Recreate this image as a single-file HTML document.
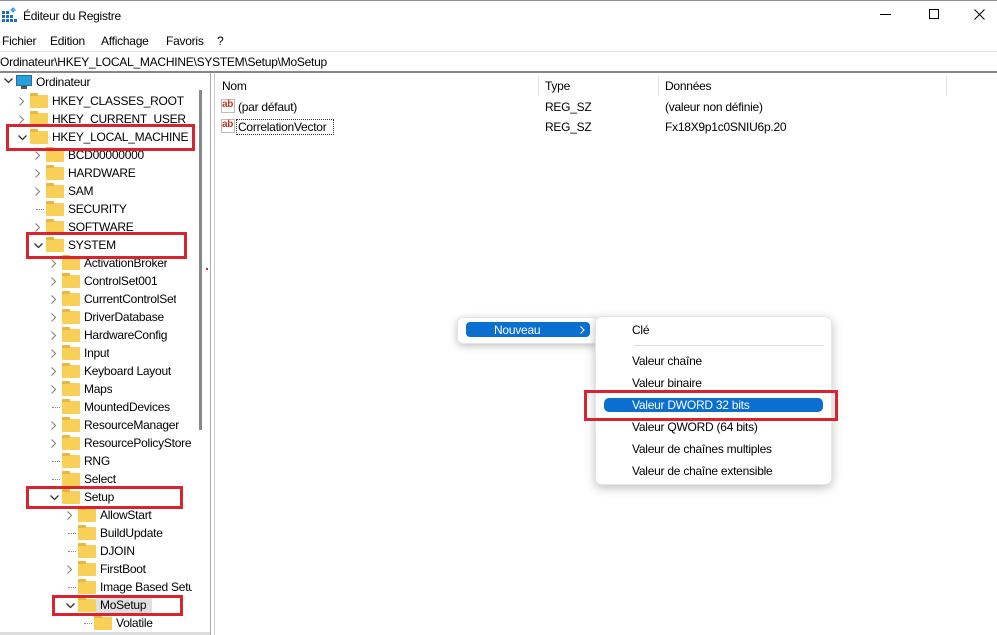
<!DOCTYPE html>
<html><head><meta charset="utf-8"><style>
*{margin:0;padding:0;box-sizing:border-box}
body{width:997px;height:635px;overflow:hidden;background:#fff;font-family:"Liberation Sans",sans-serif;font-size:12px;letter-spacing:-0.25px;color:#000;position:relative}
.a{position:absolute;white-space:nowrap}
.f{position:absolute;width:18px;height:13px;background:#f8cf57;border-radius:1px}
.f:before{content:"";position:absolute;left:0;top:-2px;width:8px;height:3px;background:#e9b53d;border-radius:1px 1px 0 0}
.red{position:absolute;border:3px solid #d9232e}
.mi{position:absolute;left:632px;font-size:12px}
</style></head><body>
<div class="a" style="left:0;top:0;width:997px;height:1px;background:#8a9199"></div>
<svg class="a" style="left:2px;top:7px" width="16" height="16"><g fill="#1f6fbf"><rect x="0" y="4" width="3" height="3"/><rect x="4" y="4" width="3" height="3"/><rect x="0" y="8" width="3" height="3"/><rect x="4" y="8" width="3" height="3"/><rect x="8" y="8" width="3" height="3"/><rect x="0" y="12" width="3" height="3"/><rect x="4" y="12" width="3" height="3"/><rect x="8" y="12" width="3" height="3"/><rect x="12" y="12" width="3" height="3"/><rect x="9" y="1" width="4" height="4" transform="rotate(45 11 3)" fill="#3fa4ef"/></g></svg>
<div class="a" style="left:23px;top:9px;font-size:12px">Éditeur du Registre</div>
<div class="a" style="left:880px;top:14px;width:11px;height:1px;background:#000"></div>
<div class="a" style="left:929px;top:9px;width:10px;height:10px;border:1px solid #000"></div>
<svg class="a" style="left:974px;top:9px" width="11" height="11"><path d="M0.5 0.5L10.5 10.5M10.5 0.5L0.5 10.5" stroke="#000" stroke-width="1"/></svg>
<div class="a" style="left:2px;top:34px">Fichier</div>
<div class="a" style="left:50px;top:34px">Edition</div>
<div class="a" style="left:101px;top:34px">Affichage</div>
<div class="a" style="left:166px;top:34px">Favoris</div>
<div class="a" style="left:217px;top:34px">?</div>
<div class="a" style="left:0;top:51px;width:997px;height:1px;background:#e5e5e5"></div>
<div class="a" style="left:0;top:55px">Ordinateur\HKEY_LOCAL_MACHINE\SYSTEM\Setup\MoSetup</div>
<div class="a" style="left:0;top:71px;width:997px;height:2px;background:#888"></div>
<div class="a" style="left:199px;top:90px;width:3px;height:340px;background:#888"></div>
<div class="a" style="left:210px;top:73px;width:1px;height:562px;background:#aaa"></div>
<div class="a" style="left:214px;top:73px;width:1px;height:562px;background:#ccc"></div>
<div class="a" style="left:206px;top:268px;width:2px;height:2px;background:#d9232e"></div>
<div class="a" style="left:0;top:632px;width:210px;height:3px;background:#ddd"></div>
<div class="a" style="left:222px;top:79px">Nom</div>
<div class="a" style="left:545px;top:79px">Type</div>
<div class="a" style="left:665px;top:79px">Données</div>
<div class="a" style="left:538px;top:76px;width:1px;height:20px;background:#e5e5e5"></div>
<div class="a" style="left:658px;top:76px;width:1px;height:20px;background:#e5e5e5"></div>
<div class="a" style="left:946px;top:76px;width:1px;height:20px;background:#e5e5e5"></div>
<div class="a" style="left:221px;top:99px;width:14px;height:14px;border:1px solid #bbb;color:#c0392b;font-size:10px;font-weight:bold;line-height:10px">ab</div>
<div class="a" style="left:238px;top:100px">(par défaut)</div>
<div class="a" style="left:545px;top:100px">REG_SZ</div>
<div class="a" style="left:665px;top:100px">(valeur non définie)</div>
<div class="a" style="left:221px;top:119px;width:14px;height:14px;border:1px solid #bbb;color:#c0392b;font-size:10px;font-weight:bold;line-height:10px">ab</div>
<div class="a" style="left:236px;top:119px;width:98px;height:16px;border:1px dotted #333"></div>
<div class="a" style="left:238px;top:120px">CorrelationVector</div>
<div class="a" style="left:545px;top:120px">REG_SZ</div>
<div class="a" style="left:665px;top:120px">Fx18X9p1c0SNIU6p.20</div>

<div class="a" style="left:16px;top:75px;width:16px;height:11px;background:#27a0d8;border:1px solid #1a6fa0"></div>
<div class="a" style="left:21px;top:86px;width:6px;height:3px;background:#555"></div>
<svg class="a" style="left:4px;top:78px" width="9" height="6"><path d="M0.5 0.5L4.5 4.5L8.5 0.5" fill="none" stroke="#333" stroke-width="1.3"/></svg>
<div class="a" style="left:36px;top:75px">Ordinateur</div>
<div id="t"></div>
<script>
var rows=[
[1,'>', 'HKEY_CLASSES_ROOT'],[1,'>','HKEY_CURRENT_USER'],[1,'v','HKEY_LOCAL_MACHINE'],
[2,'>','BCD00000000'],[2,'>','HARDWARE'],[2,'>','SAM'],[2,'','SECURITY'],[2,'>','SOFTWARE'],[2,'v','SYSTEM'],
[3,'>','ActivationBroker'],[3,'>','ControlSet001'],[3,'>','CurrentControlSet'],[3,'>','DriverDatabase'],[3,'>','HardwareConfig'],[3,'>','Input'],[3,'>','Keyboard Layout'],[3,'>','Maps'],[3,'','MountedDevices'],[3,'>','ResourceManager'],[3,'>','ResourcePolicyStore'],[3,'','RNG'],[3,'','Select'],[3,'v','Setup'],
[4,'>','AllowStart'],[4,'','BuildUpdate'],[4,'','DJOIN'],[4,'>','FirstBoot'],[4,'','Image Based Setup'],[4,'v','MoSetup'],[5,'','Volatile']];
var h='';rows.forEach(function(r,i){var y=93+i*18,L=r[0],fx=14+L*16,ax=fx-12;
if(r[1]=='>')h+='<svg class="a" style="left:'+(ax+1)+'px;top:'+(y+4)+'px" width="6" height="9"><path d="M0.5 0.5L4.5 4.5L0.5 8.5" fill="none" stroke="#888" stroke-width="1.2"/></svg>';
if(r[1]=='v')h+='<svg class="a" style="left:'+ax+'px;top:'+(y+6)+'px" width="9" height="6"><path d="M0.5 0.5L4.5 4.5L8.5 0.5" fill="none" stroke="#333" stroke-width="1.3"/></svg>';
if(r[1]=='')h+='<div class="a" style="left:'+(ax+2)+'px;top:'+(y+8)+'px;width:8px;border-top:1px dotted #888"></div>';
if(r[2]=='MoSetup')h+='<div class="a" style="left:'+(fx+18)+'px;top:'+(y-1)+'px;width:56px;height:17px;background:#e0e0e0"></div>';
h+='<div class="f" style="left:'+fx+'px;top:'+(y+2)+'px"></div><div class="a" style="left:'+(fx+22)+'px;top:'+(y+1)+'px;max-width:'+(192-fx-22)+'px;overflow:hidden">'+r[2]+'</div>';});
document.getElementById('t').outerHTML=h;
</script>
<div class="red" style="left:6px;top:124px;width:189px;height:27px"></div>
<div class="red" style="left:26px;top:232px;width:161px;height:27px"></div>
<div class="red" style="left:26px;top:486px;width:157px;height:23px"></div>
<div class="red" style="left:52px;top:595px;width:131px;height:21px"></div>

<div class="a" style="left:457px;top:317px;width:142px;height:27px;background:#fff;border-radius:6px;box-shadow:0 2px 8px rgba(0,0,0,.25);border:1px solid #e6e6e6"></div>
<div class="a" style="left:466px;top:322px;width:124px;height:15px;background:#0a6fcf;border-radius:4px;color:#fff"><span style="position:absolute;left:28px;top:1px">Nouveau</span><svg style="position:absolute;left:114px;top:4px" width="5" height="8"><path d="M0.5 0.5L4 4L0.5 7.5" fill="none" stroke="#fff" stroke-width="1.1"/></svg></div>
<div class="a" style="left:595px;top:316px;width:237px;height:169px;background:#fff;border-radius:7px;box-shadow:0 3px 10px rgba(0,0,0,.25);border:1px solid #e6e6e6"></div>
<div class="mi" style="top:323px">Clé</div>
<div class="a" style="left:634px;top:345px;width:190px;height:1px;background:#ddd"></div>
<div class="mi" style="top:354px">Valeur chaîne</div>
<div class="mi" style="top:376px">Valeur binaire</div>
<div class="a" style="left:604px;top:398px;width:219px;height:14px;background:#0a6fcf;border-radius:5px"></div>
<div class="mi" style="top:398px;color:#fff">Valeur DWORD 32 bits</div>
<div class="mi" style="top:420px">Valeur QWORD (64 bits)</div>
<div class="mi" style="top:442px">Valeur de chaînes multiples</div>
<div class="mi" style="top:464px">Valeur de chaîne extensible</div>
<div class="red" style="left:584px;top:390px;width:254px;height:31px"></div>
</body></html>
